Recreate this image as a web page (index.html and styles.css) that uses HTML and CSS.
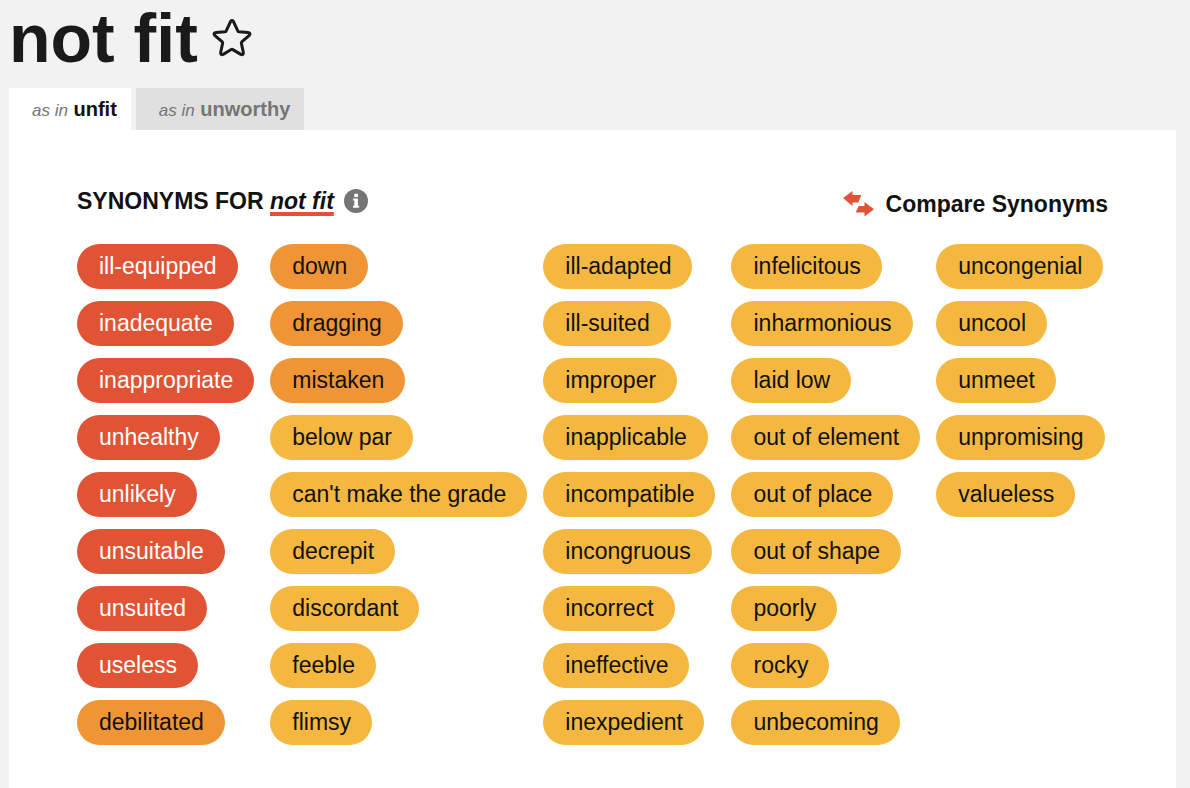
FILE: index.html
```html
<!DOCTYPE html>
<html lang="en">
<head>
<meta charset="utf-8">
<title>not fit – synonyms</title>
<link rel="stylesheet" href="styles.css">
</head>
<body>
<header class="entry">
  <h1 class="entry-title">not fit</h1>
  <button class="icon-button" type="button" aria-label="Save word">
    <svg class="star" viewBox="0 0 40 38" aria-hidden="true"><path d="M18.4 2.8Q20 0 21.6 2.8L25.8 11.8Q26 12.6 27 12.7L36 13.6Q39.4 14.2 37 16.6L30 22.6Q29.2 23.3 29.4 24.4L31.3 33.2Q31.6 36.6 28.8 35.4L20.8 30.6Q20 30.1 19.2 30.6L11.2 35.4Q8.4 36.6 8.7 33.2L10.6 24.4Q10.8 23.3 10 22.6L3 16.6Q.6 14.2 4 13.6L13 12.7Q14 12.6 14.2 11.8Z"/></svg>
  </button>
</header>
<nav class="tabs" aria-label="Senses">
  <a class="tab tab-active" href="#unfit"><em>as in</em> <strong>unfit</strong></a>
  <a class="tab" href="#unworthy"><em>as in</em> <strong>unworthy</strong></a>
</nav>
<main class="panel" id="unfit">
  <div class="panel-head">
    <div class="heading-group">
      <h2 class="heading">SYNONYMS FOR <em class="term">not fit</em></h2>
      <button class="icon-button" type="button" aria-label="About synonyms">
        <svg class="info" viewBox="0 0 24 24" aria-hidden="true"><circle cx="12" cy="12" r="12" fill="#757575"/><path d="M10.3 4.8h3.6v3.1h-3.6zM9.2 9.6h4.7v7.2h1.2v2H9v-2h1.3v-5.2H9.2z" fill="#fff"/></svg>
      </button>
    </div>
    <button class="compare" type="button">
      <svg class="arrows" viewBox="0 0 31 26" aria-hidden="true"><path d="M0 7L9.5 0v4H18.3L15.4 11.6H9.5V15zM15.7 15H21.5V11L31 18.2 21.5 25.6v-4.2H12.7z"/></svg>
      Compare Synonyms
    </button>
  </div>
  <div class="words">
    <ul class="column">
      <li><a class="pill strong" href="#ill-equipped">ill-equipped</a></li>
      <li><a class="pill strong" href="#inadequate">inadequate</a></li>
      <li><a class="pill strong" href="#inappropriate">inappropriate</a></li>
      <li><a class="pill strong" href="#unhealthy">unhealthy</a></li>
      <li><a class="pill strong" href="#unlikely">unlikely</a></li>
      <li><a class="pill strong" href="#unsuitable">unsuitable</a></li>
      <li><a class="pill strong" href="#unsuited">unsuited</a></li>
      <li><a class="pill strong" href="#useless">useless</a></li>
      <li><a class="pill medium" href="#debilitated">debilitated</a></li>
    </ul>
    <ul class="column">
      <li><a class="pill medium" href="#down">down</a></li>
      <li><a class="pill medium" href="#dragging">dragging</a></li>
      <li><a class="pill medium" href="#mistaken">mistaken</a></li>
      <li><a class="pill" href="#below-par">below par</a></li>
      <li><a class="pill" href="#cant-make-the-grade">can't make the grade</a></li>
      <li><a class="pill" href="#decrepit">decrepit</a></li>
      <li><a class="pill" href="#discordant">discordant</a></li>
      <li><a class="pill" href="#feeble">feeble</a></li>
      <li><a class="pill" href="#flimsy">flimsy</a></li>
    </ul>
    <ul class="column">
      <li><a class="pill" href="#ill-adapted">ill-adapted</a></li>
      <li><a class="pill" href="#ill-suited">ill-suited</a></li>
      <li><a class="pill" href="#improper">improper</a></li>
      <li><a class="pill" href="#inapplicable">inapplicable</a></li>
      <li><a class="pill" href="#incompatible">incompatible</a></li>
      <li><a class="pill" href="#incongruous">incongruous</a></li>
      <li><a class="pill" href="#incorrect">incorrect</a></li>
      <li><a class="pill" href="#ineffective">ineffective</a></li>
      <li><a class="pill" href="#inexpedient">inexpedient</a></li>
    </ul>
    <ul class="column">
      <li><a class="pill" href="#infelicitous">infelicitous</a></li>
      <li><a class="pill" href="#inharmonious">inharmonious</a></li>
      <li><a class="pill" href="#laid-low">laid low</a></li>
      <li><a class="pill" href="#out-of-element">out of element</a></li>
      <li><a class="pill" href="#out-of-place">out of place</a></li>
      <li><a class="pill" href="#out-of-shape">out of shape</a></li>
      <li><a class="pill" href="#poorly">poorly</a></li>
      <li><a class="pill" href="#rocky">rocky</a></li>
      <li><a class="pill" href="#unbecoming">unbecoming</a></li>
    </ul>
    <ul class="column">
      <li><a class="pill" href="#uncongenial">uncongenial</a></li>
      <li><a class="pill" href="#uncool">uncool</a></li>
      <li><a class="pill" href="#unmeet">unmeet</a></li>
      <li><a class="pill" href="#unpromising">unpromising</a></li>
      <li><a class="pill" href="#valueless">valueless</a></li>
    </ul>
  </div>
</main>
</body>
</html>
```
FILE: styles.css
```css
* {
  box-sizing: border-box;
}

body {
  display: flex;
  flex-direction: column;
  min-height: 100vh;
  margin: 0;
  padding: 0 14px 0 9px;
  background: #f2f2f2;
  color: #1a1a1a;
  font-family: "Liberation Sans", Arial, sans-serif;
}

a {
  color: inherit;
  text-decoration: none;
}

button {
  border: 0;
  padding: 0;
  background: none;
  color: inherit;
  font: inherit;
  cursor: pointer;
}

.icon-button {
  display: flex;
}

.entry {
  display: flex;
  align-items: center;
  gap: 14px;
  height: 76px;
}

.entry-title {
  margin: 0;
  font-size: 68px;
  line-height: 76px;
}

.star {
  width: 40px;
  height: 38px;
  fill: none;
  stroke: #1a1a1a;
  stroke-width: 3;
  stroke-linejoin: round;
}

.tabs {
  display: flex;
  gap: 5px;
  margin-top: 12px;
}

.tab {
  padding: 0 14px 0 23px;
  background: #e0e0e0;
  color: #757575;
  font-size: 20px;
  line-height: 42px;
}

.tab em {
  color: #757575;
  font-size: 17px;
  line-height: 1;
}

.tab-active {
  background: #fff;
  color: #111;
}

.panel {
  flex: 1;
  padding: 56px 68px 44px;
  background: #fff;
  color: #111;
}

.panel-head {
  display: flex;
  justify-content: space-between;
  align-items: flex-start;
  font-size: 23px;
  font-weight: bold;
}

.heading-group {
  display: flex;
  align-items: center;
  gap: 10px;
}

.heading {
  margin: 0;
  font-size: 23px;
  line-height: 30px;
}

.term {
  text-decoration: underline 4px #e05334;
  text-decoration-skip-ink: none;
  text-underline-offset: 3px;
}

.info {
  width: 24px;
  height: 24px;
}

.compare {
  display: flex;
  align-items: center;
  gap: 12px;
  line-height: 36px;
}

.arrows {
  width: 31px;
  height: 26px;
  fill: #e05334;
}

.words {
  display: flex;
  gap: 16px;
  margin-top: 22px;
}

.column {
  display: flex;
  flex-direction: column;
  gap: 12px;
  margin: 0;
  padding: 0;
  list-style: none;
}

.pill {
  display: inline-block;
  padding: 0 21px 0 22px;
  border-radius: 23px;
  background: #f4b740;
  font-size: 23px;
  line-height: 45px;
  white-space: nowrap;
  vertical-align: top;
}

.pill.strong {
  background: #e05334;
  color: #fff;
}

.pill.medium {
  background: #f09536;
}
```
